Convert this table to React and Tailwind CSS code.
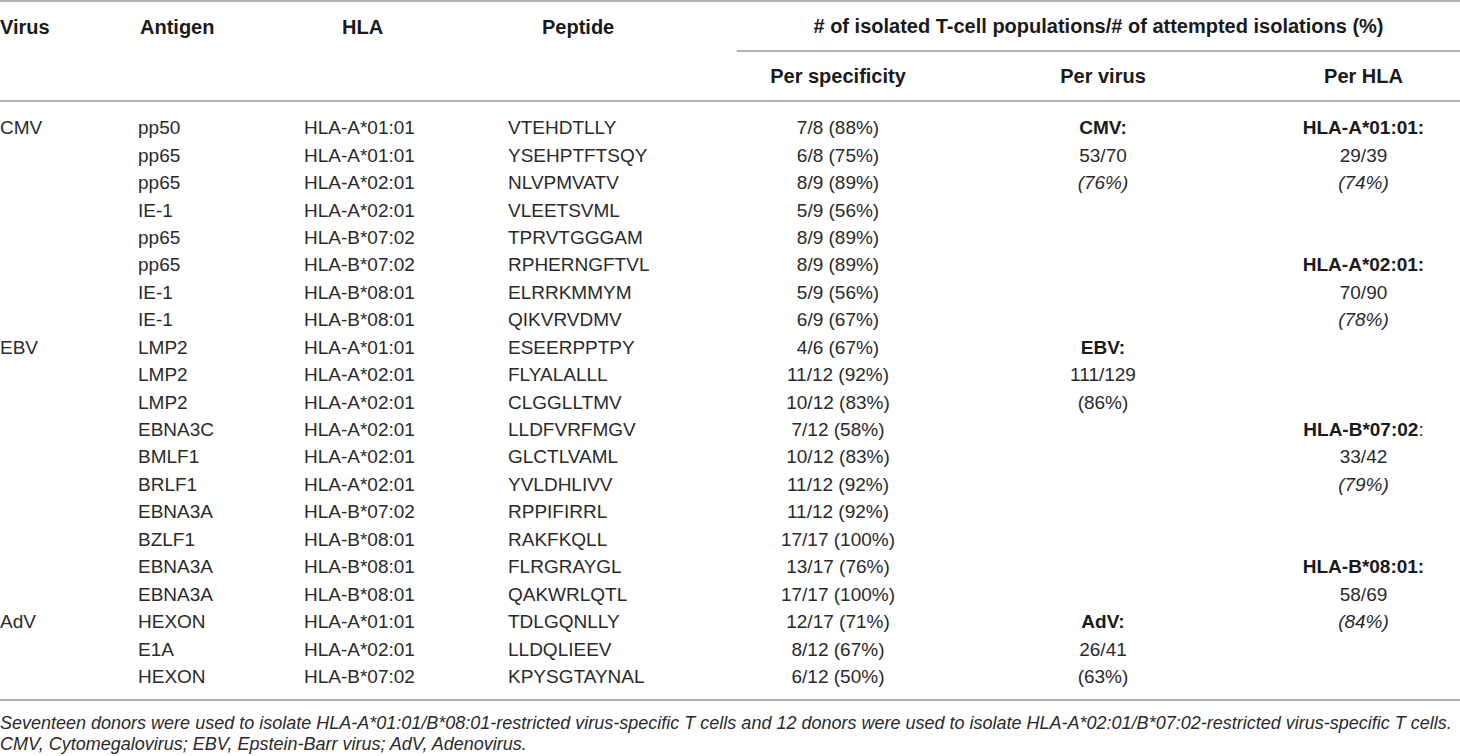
const rows = [
  ["CMV", "pp50", "HLA-A*01:01", "VTEHDTLLY", "7/8 (88%)"],
  ["", "pp65", "HLA-A*01:01", "YSEHPTFTSQY", "6/8 (75%)"],
  ["", "pp65", "HLA-A*02:01", "NLVPMVATV", "8/9 (89%)"],
  ["", "IE-1", "HLA-A*02:01", "VLEETSVML", "5/9 (56%)"],
  ["", "pp65", "HLA-B*07:02", "TPRVTGGGAM", "8/9 (89%)"],
  ["", "pp65", "HLA-B*07:02", "RPHERNGFTVL", "8/9 (89%)"],
  ["", "IE-1", "HLA-B*08:01", "ELRRKMMYM", "5/9 (56%)"],
  ["", "IE-1", "HLA-B*08:01", "QIKVRVDMV", "6/9 (67%)"],
  ["EBV", "LMP2", "HLA-A*01:01", "ESEERPPTPY", "4/6 (67%)"],
  ["", "LMP2", "HLA-A*02:01", "FLYALALLL", "11/12 (92%)"],
  ["", "LMP2", "HLA-A*02:01", "CLGGLLTMV", "10/12 (83%)"],
  ["", "EBNA3C", "HLA-A*02:01", "LLDFVRFMGV", "7/12 (58%)"],
  ["", "BMLF1", "HLA-A*02:01", "GLCTLVAML", "10/12 (83%)"],
  ["", "BRLF1", "HLA-A*02:01", "YVLDHLIVV", "11/12 (92%)"],
  ["", "EBNA3A", "HLA-B*07:02", "RPPIFIRRL", "11/12 (92%)"],
  ["", "BZLF1", "HLA-B*08:01", "RAKFKQLL", "17/17 (100%)"],
  ["", "EBNA3A", "HLA-B*08:01", "FLRGRAYGL", "13/17 (76%)"],
  ["", "EBNA3A", "HLA-B*08:01", "QAKWRLQTL", "17/17 (100%)"],
  ["AdV", "HEXON", "HLA-A*01:01", "TDLGQNLLY", "12/17 (71%)"],
  ["", "E1A", "HLA-A*02:01", "LLDQLIEEV", "8/12 (67%)"],
  ["", "HEXON", "HLA-B*07:02", "KPYSGTAYNAL", "6/12 (50%)"],
];

// per virus / per HLA summaries, keyed by row index
const perVirus = {
  0: <b className="text-[#1a1a1a]">CMV:</b>,
  1: "53/70",
  2: <i>(76%)</i>,
  8: <b className="text-[#1a1a1a]">EBV:</b>,
  9: "111/129",
  10: "(86%)",
  18: <b className="text-[#1a1a1a]">AdV:</b>,
  19: "26/41",
  20: "(63%)",
};

const perHla = {
  0: <b className="text-[#1a1a1a]">HLA-A*01:01:</b>,
  1: "29/39",
  2: <i>(74%)</i>,
  5: <b className="text-[#1a1a1a]">HLA-A*02:01:</b>,
  6: "70/90",
  7: <i>(78%)</i>,
  11: (
    <>
      <b className="text-[#1a1a1a]">HLA-B*07:02</b>:
    </>
  ),
  12: "33/42",
  13: <i>(79%)</i>,
  16: <b className="text-[#1a1a1a]">HLA-B*08:01:</b>,
  17: "58/69",
  18: <i>(84%)</i>,
};

const cols = "grid grid-cols-[138px_166px_204px_229px_202px_328px_193px]";

const Line = ({ className = "" }) => (
  <div className={"h-[2px] bg-[#b4b4b4] " + className} />
);

export default function App() {
  return (
    <div
      className="w-[1460px] h-[756px] bg-white text-[#1a1a1a] overflow-hidden"
      style={{ fontFamily: '"Liberation Sans", Arial, sans-serif' }}
    >
      <Line />
      {/* header */}
      <div className="flex">
        <div className="w-[737px] grid grid-cols-[138px_166px_204px_229px] h-[98px] text-[20px] font-bold">
          <div className="h-[49px] flex items-center">Virus</div>
          <div className="h-[49px] flex items-center pl-[2px]">Antigen</div>
          <div className="h-[49px] flex items-center pl-[38px]">HLA</div>
          <div className="h-[49px] flex items-center pl-[34px]">Peptide</div>
        </div>
        <div className="w-[723px] text-[20px] font-bold">
          <div className="h-[48px] flex items-center justify-center">
            # of isolated T-cell populations/# of attempted isolations (%)
          </div>
          <Line />
          <div className="grid grid-cols-[202px_328px_193px] h-[48px] items-center text-center">
            <div>Per specificity</div>
            <div>Per virus</div>
            <div>Per HLA</div>
          </div>
        </div>
      </div>
      <Line />

      {/* body */}
      <div className="pt-[12px] pb-[9px] text-[19px] text-[#2a2a2a]">
        {rows.map((r, i) => (
          <div key={i} className={cols + " h-[27.45px] items-center leading-none"}>
            <div>{r[0]}</div>
            <div>{r[1]}</div>
            <div>{r[2]}</div>
            <div>{r[3]}</div>
            <div className="text-center">{r[4]}</div>
            <div className="text-center">{perVirus[i]}</div>
            <div className="text-center">{perHla[i]}</div>
          </div>
        ))}
      </div>
      <Line />

      <div className="pt-[12px] text-[18px] italic leading-[21px] text-[#2a2a2a]">
        <p>
          Seventeen donors were used to isolate HLA-A*01:01/B*08:01-restricted virus-specific T cells and 12
          donors were used to isolate HLA-A*02:01/B*07:02-restricted virus-specific T cells.
        </p>
        <p>CMV, Cytomegalovirus; EBV, Epstein-Barr virus; AdV, Adenovirus.</p>
      </div>
    </div>
  );
}
